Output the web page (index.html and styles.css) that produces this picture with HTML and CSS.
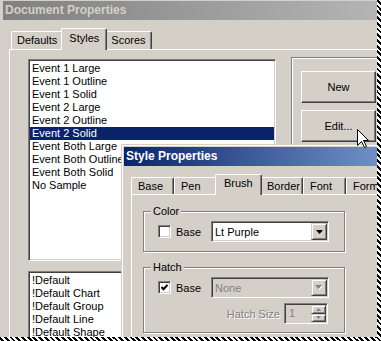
FILE: index.html
```html
<!DOCTYPE html>
<html lang="en">
<head>
<meta charset="UTF-8">
<title>Document Properties</title>
<link rel="stylesheet" href="styles.css">
</head>
<body>

<div class="screen">

<div class="dlg">
<div class="cap cap-off">Document Properties</div>
<div class="dlg-body">

<div class="tabs">
<div class="tab">Defaults</div>
<div class="tab sel">Styles</div>
<div class="tab">Scores</div>
</div>

<div class="page page-main">

<div class="lists">
<div class="list list-top">
<div class="item">Event 1 Large</div>
<div class="item">Event 1 Outline</div>
<div class="item">Event 1 Solid</div>
<div class="item">Event 2 Large</div>
<div class="item">Event 2 Outline</div>
<div class="item hi">Event 2 Solid</div>
<div class="item">Event Both Large</div>
<div class="item">Event Both Outline</div>
<div class="item">Event Both Solid</div>
<div class="item">No Sample</div>
</div>
<div class="list list-bottom">
<div class="item">!Default</div>
<div class="item">!Default Chart</div>
<div class="item">!Default Group</div>
<div class="item">!Default Line</div>
<div class="item">!Default Shape</div>
</div>
</div>

<div class="etched btns">
<div class="btn">New</div>
<div class="btn">Edit...</div>
</div>

</div>
</div>
</div>

<!-- second dialog, opened over the first -->
<div class="win">
<div class="cap cap-on">Style Properties</div>
<div class="win-body">

<div class="tabs tabs-fixed">
<div class="tab">Base</div>
<div class="tab">Pen</div>
<div class="tab sel">Brush</div>
<div class="tab">Border</div>
<div class="tab">Font</div>
<div class="tab">Format</div>
</div>

<div class="page page-brush">

<div class="etched box">
<div class="legend">Color</div>
<div class="row">
<div class="opt"><span class="chk"></span>Base</div>
<div class="combo">
<span class="val">Lt Purple</span>
<span class="drop"><svg width="7" height="4" viewBox="0 0 7 4"><path d="M0 0h7L3.5 4z" fill="#000"/></svg></span>
</div>
</div>
</div>

<div class="etched box hatch">
<div class="legend">Hatch</div>
<div class="row">
<div class="opt"><span class="chk"><svg width="7" height="7" viewBox="0 0 7 7"><path d="M0.5 3l2 2.2L6.5 0.8" fill="none" stroke="#000" stroke-width="2"/></svg></span>Base</div>
<div class="combo off">
<span class="val">None</span>
<span class="drop"><svg width="8" height="5" viewBox="0 0 8 5"><path d="M1 1h7L4.5 5z" fill="#fff"/><path d="M0 0h7L3.5 4z" fill="#808080"/></svg></span>
</div>
</div>
<div class="row row-size">
<span class="dim">Hatch Size</span>
<div class="spin">
<span class="val">1</span>
<span class="spin-btns">
<span class="sb"><svg width="5" height="3" viewBox="0 0 5 3"><path d="M0 3h5L2.5 0z" fill="#808080"/></svg></span>
<span class="sb"><svg width="5" height="3" viewBox="0 0 5 3"><path d="M0 0h5L2.5 3z" fill="#808080"/></svg></span>
</span>
</div>
</div>
</div>

</div>
</div>
</div>

<svg class="cursor" width="13" height="20" viewBox="0 0 13 20">
<path d="M0.5 0.5V16.5L4.5 12.5L7.5 18.5L9.5 17.5L6.5 11.5H11.5Z" fill="#fff" stroke="#000" stroke-width="1"/>
</svg>

</div>

</body>
</html>
```

FILE: styles.css
```css
*{box-sizing:border-box}

body{
margin:0;
background:#fff;
font-family:"Liberation Sans",Arial,sans-serif;
font-size:11px;
color:#000;
}

.screen{
position:relative;
width:381px;
height:341px;
overflow:hidden;
background:#d4d0c8;
border-style:solid;
border-width:0 4px 4px 0;
border-image:repeating-linear-gradient(45deg,#000 0 2px,#fff 2px 4px) 4;
}

/* title bars */
.cap{
height:19px;
line-height:19px;
padding-left:2px;
font-size:12px;
font-weight:bold;
white-space:nowrap;
}
.cap-off{
margin:1px 0 0 3px;
background:linear-gradient(to right,#808080,#b4b4b4);
color:#d4d0c8;
}
.cap-on{
background:linear-gradient(to right,#0a246a,#80a1d6);
color:#fff;
}

.dlg-body{padding:8px 0 0 9px}

/* tabs */
.tabs{
display:flex;
align-items:flex-end;
height:21px;
padding-left:2px;
}
.tab{
flex:none;
height:18px;
line-height:17px;
padding:0 5px;
border:1px solid;
border-bottom:0;
border-color:#fff #404040 #fff #fff;
border-radius:2px 2px 0 0;
box-shadow:inset -1px 0 #808080;
white-space:nowrap;
}
.tab.sel{
position:relative;
height:22px;
line-height:19px;
margin:0 -2px -1px;
padding:0 7px;
background:#d4d0c8;
}

.tabs-fixed{height:20px;padding-left:0}
.tabs-fixed .tab{width:43px;height:17px;line-height:16px;padding:0 0 0 6px}
.tabs-fixed .tab.sel{width:47px;height:21px;line-height:17px;padding-left:8px}

.page{
background:#d4d0c8;
border-top:1px solid #fff;
border-left:1px solid #fff;
}
.page-main{
display:flex;
align-items:flex-start;
height:300px;
padding:9px 0 0 18px;
}

/* list boxes */
.lists{
flex:none;
width:248px;
display:flex;
flex-direction:column;
gap:10px;
}
.list{
background:#fff;
border:1px solid;
border-color:#808080 #fff #fff #808080;
box-shadow:inset 1px 1px #404040,inset -1px -1px #d4d0c8;
padding:2px 1px;
overflow:hidden;
}
.list-top{height:202px}
.list-bottom{height:100px}
.item{
height:13px;
line-height:13px;
padding-left:2px;
white-space:nowrap;
}
.item.hi{background:#0a246a;color:#fff}

.etched{
border:1px solid #808080;
box-shadow:inset 1px 1px #fff,1px 1px #fff;
}

.btns{
flex:none;
width:110px;
height:200px;
margin:-2px 0 0 15px;
padding:13px 0 0 9px;
display:flex;
flex-direction:column;
gap:7px;
}
.btn{
width:75px;
height:32px;
display:flex;
align-items:center;
justify-content:center;
border:1px solid;
border-color:#fff #404040 #404040 #fff;
box-shadow:inset -1px -1px #808080;
}

/* style properties window */
.win{
position:absolute;
left:121px;
top:144px;
width:300px;
height:240px;
padding:2px;
background:#d4d0c8;
border:1px solid #d4d0c8;
box-shadow:inset 1px 1px #fff;
}
.win-body{padding:8px 0 0 7px}

.page-brush{
height:200px;
padding:16px 0 0 11px;
}

.box{
width:202px;
padding-bottom:9px;
}
.box.hatch{margin-top:15px;padding-bottom:8px}
.legend{
width:fit-content;
height:13px;
line-height:13px;
margin:-7px 0 0 7px;
padding:0 2px;
background:#d4d0c8;
}

.row{
display:flex;
align-items:center;
height:21px;
margin-top:3px;
}
.opt{
flex:none;
display:flex;
align-items:center;
gap:5px;
width:53px;
margin-left:14px;
}
.chk{
flex:none;
width:13px;
height:13px;
display:flex;
align-items:center;
justify-content:center;
background:#fff;
border:1px solid;
border-color:#808080 #fff #fff #808080;
box-shadow:inset 1px 1px #404040,inset -1px -1px #d4d0c8;
}

.combo,.spin{
display:flex;
align-items:center;
height:21px;
padding:1px;
background:#fff;
border:1px solid;
border-color:#808080 #fff #fff #808080;
box-shadow:inset 1px 1px #404040,inset -1px -1px #d4d0c8;
}
.combo{width:118px}
.combo .val{flex:1;padding-left:2px;white-space:nowrap}
.combo.off,.spin{background:#d4d0c8}
.combo.off .val{color:#808080}

.drop,.sb{
display:flex;
align-items:center;
justify-content:center;
background:#d4d0c8;
border:1px solid;
border-color:#d4d0c8 #404040 #404040 #d4d0c8;
box-shadow:inset 1px 1px #fff,inset -1px -1px #808080;
}
.drop{width:16px;height:17px;flex:none}

.row-size{
justify-content:flex-end;
padding-right:16px;
margin-top:5px;
}
.dim{
color:#808080;
text-shadow:1px 1px #fff;
margin-right:4px;
}
.spin{width:44px;align-items:stretch}
.spin .val{flex:1;padding-left:3px;line-height:17px;color:#808080}
.spin-btns{
flex:none;
width:15px;
display:flex;
flex-direction:column;
}
.sb{flex:1}

.cursor{
position:absolute;
left:357px;
top:129px;
}
```
